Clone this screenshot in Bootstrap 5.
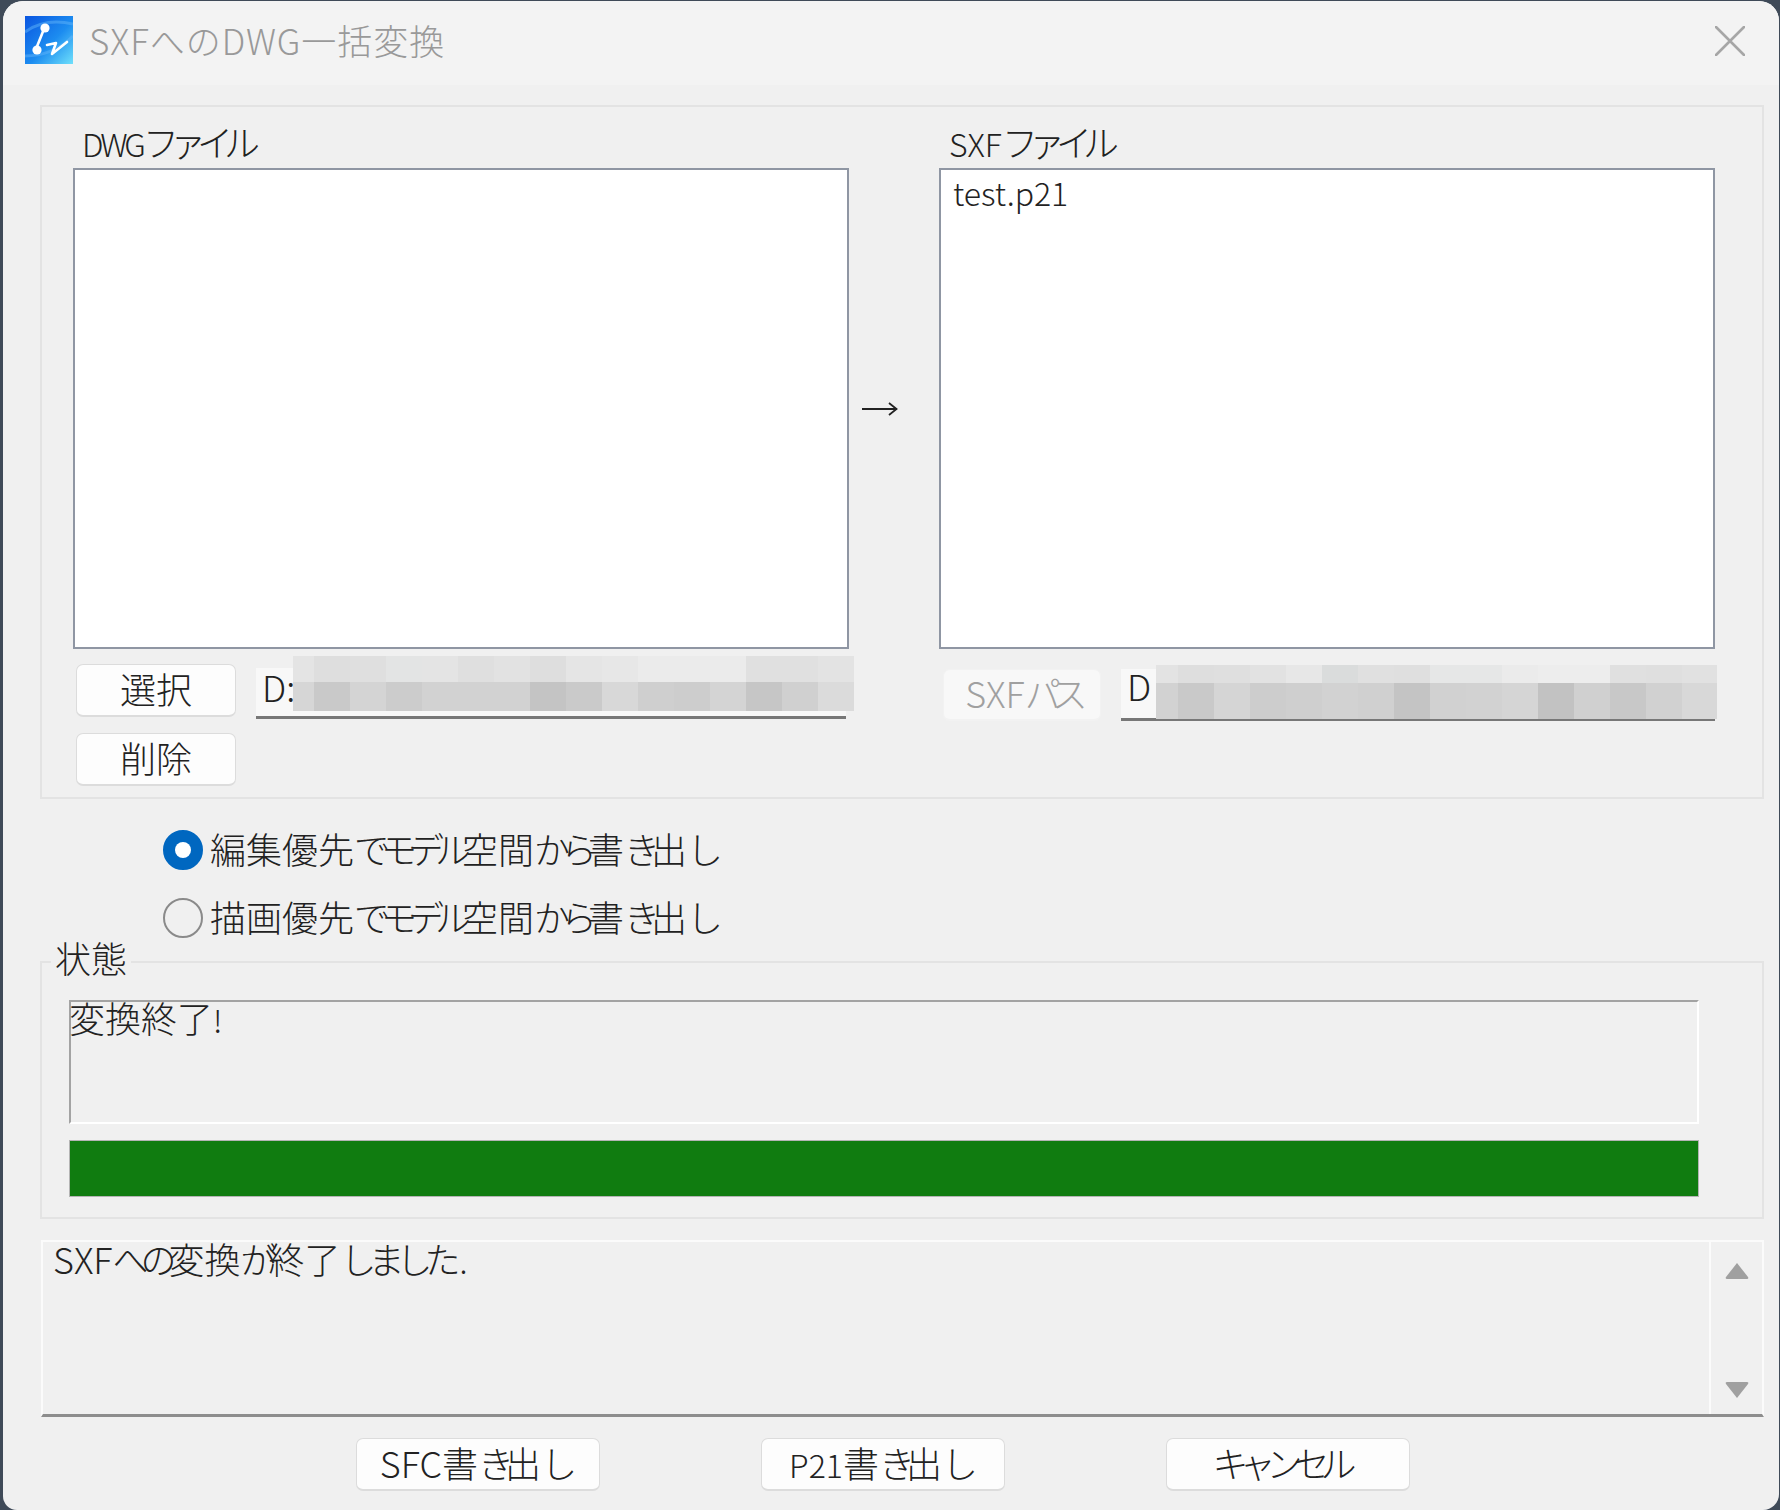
<!DOCTYPE html>
<html lang="ja">
<head>
<meta charset="utf-8">
<title>SXFへのDWG一括変換</title>
<link href="https://cdn.jsdelivr.net/npm/bootstrap@5.3.0/dist/css/bootstrap.min.css" rel="stylesheet">
<style>
html,body{height:1510px;margin:0;background:#3f4a58;overflow:hidden}
body{font-family:"Noto Sans CJK JP","Liberation Sans",sans-serif;font-size:36px;line-height:1.2;color:#222;font-weight:300}
.kn{letter-spacing:-9px}
.kn-loose{letter-spacing:-8px}
.lt{font-size:32px}
.lt-wide{font-size:36px}
.lt-tight{letter-spacing:-3px}
.stop-dot{font-size:32px;margin-left:7px}
.dlg{margin:1px 1px 0 3px;height:1509px;background:#f0f0f0;border-radius:20px 20px 16px 14px;overflow:hidden}
.dlg-title{height:84px;background:#f3f3f3;padding-left:22px;padding-right:34px;gap:16px}
.dlg-title svg.logo{width:48px;height:48px;flex:none;margin-top:-6px}
.dlg-name{color:#999;font-size:35px;letter-spacing:1px;margin-top:-6px}
.dlg-close{width:30px;height:30px;flex:none;margin-top:-4px}
.dlg-main{padding:20px 15px 0 37px}
.grp{border:2px solid #e3e3e3}
.grp-files{height:694px;padding:0 0 0 31px}
.file-col{width:776px;flex:none}
.cap{height:61px;padding:15px 0 0 9px;line-height:38px;white-space:nowrap}
.cap-r{padding-left:10px}
.listbox{height:481px;border:2px solid #8f96a3;background:#fff;border-radius:0;padding:3px 12px;line-height:38px;font-size:32px}
.arrow-col{width:90px;flex:none;padding-top:294px;padding-left:12px}
.arrow-col svg{width:37px;height:16px;display:block}
.wbtn{--bs-btn-padding-x:0;--bs-btn-padding-y:0;--bs-btn-font-size:36px;--bs-btn-font-weight:300;--bs-btn-color:#222;--bs-btn-bg:#fdfdfd;--bs-btn-border-color:#dcdcdc;--bs-btn-border-radius:7px;--bs-btn-line-height:1.2;border-width:1px 1px 2px 1px;white-space:nowrap;padding-bottom:3px}
.wbtn.small-btn{width:160px;height:53px}
.wbtn.off{width:158px;height:52px;background:#f8f8f8;color:#a0a0a0;border-color:#f2f2f2;opacity:1;margin-top:20px}
.btn-stack{margin:15px 0 0 3px;gap:16px;width:160px;flex:none}
.path-edit{position:relative;flex:1;height:51px;margin:19px 3px 0 20px;background:#f8f8f8;border-bottom:3px solid #777;padding:0 6px;line-height:36px;white-space:nowrap}
.path-right{margin:20px 0 0 20px;height:52px;line-height:33px}
.blur{position:absolute;width:561px;background-repeat:no-repeat}
.blur-l{left:37px;top:-12px;height:55px;background-image:
linear-gradient(90deg,#e4e4e4 0 21px,#dedede 21px 57px,#dfdfdf 57px 93px,#e3e4e4 93px 129px,#e4e4e4 129px 165px,#dfdfdf 165px 201px,#e2e2e2 201px 237px,#dedede 237px 273px,#e5e5e5 273px 309px,#e7e7e7 309px 345px,#ebebeb 345px 453px,#e0e0e0 453px 525px,#e3e3e3 525px),
linear-gradient(90deg,#d6d6d6 0 21px,#c9c9c9 21px 57px,#d4d4d4 57px 93px,#cccccc 93px 129px,#d2d2d2 129px 237px,#c4c4c4 237px 273px,#cacaca 273px 309px,#d8d8d8 309px 345px,#cfcfcf 345px 381px,#cdcdcd 381px 417px,#d4d4d4 417px 453px,#c6c6c6 453px 489px,#d0d0d0 489px 525px,#dbdbdb 525px);
background-size:100% 26px,100% 29px;background-position:0 0,0 26px}
.blur-r{left:35px;top:-4px;height:54px;background-image:
linear-gradient(90deg,#e3e3e3 0 22px,#dedede 22px 58px,#dfdfdf 58px 94px,#e2e2e2 94px 130px,#e7e7e7 130px 166px,#dadcdc 166px 202px,#e0e0e0 202px 238px,#dfdfdf 238px 274px,#e6e7e7 274px 346px,#ebebeb 346px 382px,#ededed 382px 454px,#e0e0e0 454px 490px,#dfdfdf 490px 526px,#e1e1e1 526px),
linear-gradient(90deg,#d2d2d2 0 22px,#c9c9c9 22px 58px,#d5d5d5 58px 94px,#cdcdcd 94px 130px,#cfcfcf 130px 166px,#d2d2d2 166px 202px,#d0d0d0 202px 238px,#c4c4c4 238px 274px,#d1d1d1 274px 310px,#d2d2d2 310px 346px,#d5d5d5 346px 382px,#c2c2c2 382px 418px,#d0d0d0 418px 454px,#c8c8c8 454px 490px,#d1d1d1 490px 526px,#d8d8d8 526px);
background-size:100% 18px,100% 36px;background-position:0 0,0 18px}
.opts{padding:31px 0 0 123px;gap:28px;height:162px}
.opt{gap:7px;min-height:0;padding:0;margin:0}
.opt .form-check-input{float:none;width:40px;height:40px;margin:0;flex:none;border:2px solid #8a8a8a;background-color:#f0f0f0}
.opt .form-check-input:checked{background-color:#0067c0;border-color:#0067c0;background-size:88%}
.opt .form-check-label{opacity:1;line-height:40px;white-space:nowrap;margin-top:-4px}
.grp-status{position:relative;height:258px;padding:37px 63px 0 27px}
.legend-cap{position:absolute;left:9px;top:-25px;background:#f0f0f0;padding:0 4px;line-height:38px;height:34px}
.status-box{height:124px;border-top:2px solid #a3a3a3;border-left:2px solid #a3a3a3;border-right:2px solid #fff;border-bottom:2px solid #fff;line-height:30px;text-indent:-2px}
.bar-track{height:57px;margin-top:16px;border:1px solid #b4b4b4;border-radius:0;background:#107c10}
.bar-track .progress-bar{background:#107c10}
.memo{height:177px;margin:21px 0 0 1px;border-top:2px solid #fbfbfb;border-left:2px solid #fbfbfb;border-right:2px solid #fbfbfb;border-bottom:3px solid #8d8d8d}
.memo-text{flex:1;padding:0 10px;line-height:33px}
.memo-bar{width:53px;flex:none;border-left:2px solid #fbfbfb;padding:20px 0 15px}
.memo-bar svg{width:24px;height:18px;display:block;fill:#a0a0a0}
.foot{padding:21px 0 0 316px;gap:161px}
.foot .wbtn{width:244px;height:53px}
</style>
</head>
<body>
<div class="dlg d-flex flex-column">
  <div class="dlg-title d-flex align-items-center">
    <svg class="logo" viewBox="0 0 48 48">
      <defs><linearGradient id="lg" x1="0" y1="0" x2="1" y2="1"><stop offset="0" stop-color="#0a55e0"/><stop offset=".55" stop-color="#1c8cf0"/><stop offset="1" stop-color="#6fe0fb"/></linearGradient></defs>
      <rect width="48" height="48" fill="url(#lg)"/>
      <path d="M0 16C14 6 30 4 48 8M0 40C18 40 34 34 48 20" stroke="#5fb4fa" stroke-width="3" fill="none" opacity=".5"/>
      <path d="M19 13L11 33" stroke="#fff" stroke-width="2.6"/>
      <circle cx="20" cy="12" r="4.6" fill="#fff"/><circle cx="12" cy="34" r="4.6" fill="#fff"/>
      <path d="M22 29L31 27L27 38L42 26" stroke="#fff" stroke-width="2.6" fill="none" stroke-linecap="round" stroke-linejoin="round"/>
    </svg>
    <div class="dlg-name flex-grow-1">SXFへのDWG一括変換</div>
    <svg class="dlg-close" viewBox="0 0 30 30"><path d="M1 1L29 29M29 1L1 29" stroke="#a6a6a6" stroke-width="2.6" stroke-linecap="round"/></svg>
  </div>
  <div class="dlg-main">
    <div class="grp grp-files d-flex">
      <div class="file-col">
        <div class="cap"><span class="lt lt-tight">DWG</span><span class="kn">ファイル</span></div>
        <div class="listbox"></div>
        <div class="d-flex">
          <div class="btn-stack d-flex flex-column">
            <button class="btn wbtn small-btn" type="button">選択</button>
            <button class="btn wbtn small-btn" type="button">削除</button>
          </div>
          <div class="path-edit"><span class="lt-wide">D:</span><div class="blur blur-l"></div></div>
        </div>
      </div>
      <div class="arrow-col"><svg viewBox="0 0 37 16"><path d="M1 8H35M28 2L35.5 8L28 14" stroke="#222" stroke-width="1.8" fill="none"/></svg></div>
      <div class="file-col">
        <div class="cap cap-r"><span class="lt">SXF</span><span class="kn">ファイル</span></div>
        <div class="listbox">test.p21</div>
        <div class="d-flex">
          <button class="btn wbtn off ms-1" type="button" disabled><span class="lt-wide">SXF</span><span class="kn">パス</span></button>
          <div class="path-edit path-right"><span class="lt-wide">D</span><div class="blur blur-r"></div></div>
        </div>
      </div>
    </div>
    <div class="opts d-flex flex-column">
      <div class="form-check opt d-flex align-items-center">
        <input class="form-check-input" type="radio" name="mode" id="m1" checked>
        <label class="form-check-label" for="m1">編集優先<span class="kn">でモデル</span>空間<span class="kn">から</span>書<span class="kn">き</span>出<span class="kn">し</span></label>
      </div>
      <div class="form-check opt d-flex align-items-center">
        <input class="form-check-input" type="radio" name="mode" id="m2">
        <label class="form-check-label" for="m2">描画優先<span class="kn">でモデル</span>空間<span class="kn">から</span>書<span class="kn">き</span>出<span class="kn">し</span></label>
      </div>
    </div>
    <div class="grp grp-status">
      <div class="legend-cap">状態</div>
      <div class="status-box">変換終了<span class="lt">!</span></div>
      <div class="progress bar-track"><div class="progress-bar w-100" role="progressbar"></div></div>
    </div>
    <div class="memo d-flex">
      <div class="memo-text"><span class="lt-wide">SXF</span><span class="kn-loose">への</span>変換<span class="kn-loose">が</span>終了<span class="kn-loose">しました</span><span class="stop-dot">.</span></div>
      <div class="memo-bar d-flex flex-column justify-content-between align-items-center">
        <svg viewBox="0 0 24 18"><path d="M12 1L23 15Q24 17 22 17H2Q0 17 1 15Z"/></svg>
        <svg viewBox="0 0 24 18"><path d="M12 17L23 3Q24 1 22 1H2Q0 1 1 3Z"/></svg>
      </div>
    </div>
    <div class="foot d-flex">
      <button class="btn wbtn pe-2" type="button"><span class="lt-wide">SFC</span>書<span class="kn">き</span>出<span class="kn">し</span></button>
      <button class="btn wbtn pe-2" type="button"><span class="lt">P21</span>書<span class="kn">き</span>出<span class="kn">し</span></button>
      <button class="btn wbtn pe-3" type="button"><span class="kn">キャンセル</span></button>
    </div>
  </div>
</div>
<script src="https://cdn.jsdelivr.net/npm/bootstrap@5.3.0/dist/js/bootstrap.bundle.min.js"></script>
</body>
</html>
